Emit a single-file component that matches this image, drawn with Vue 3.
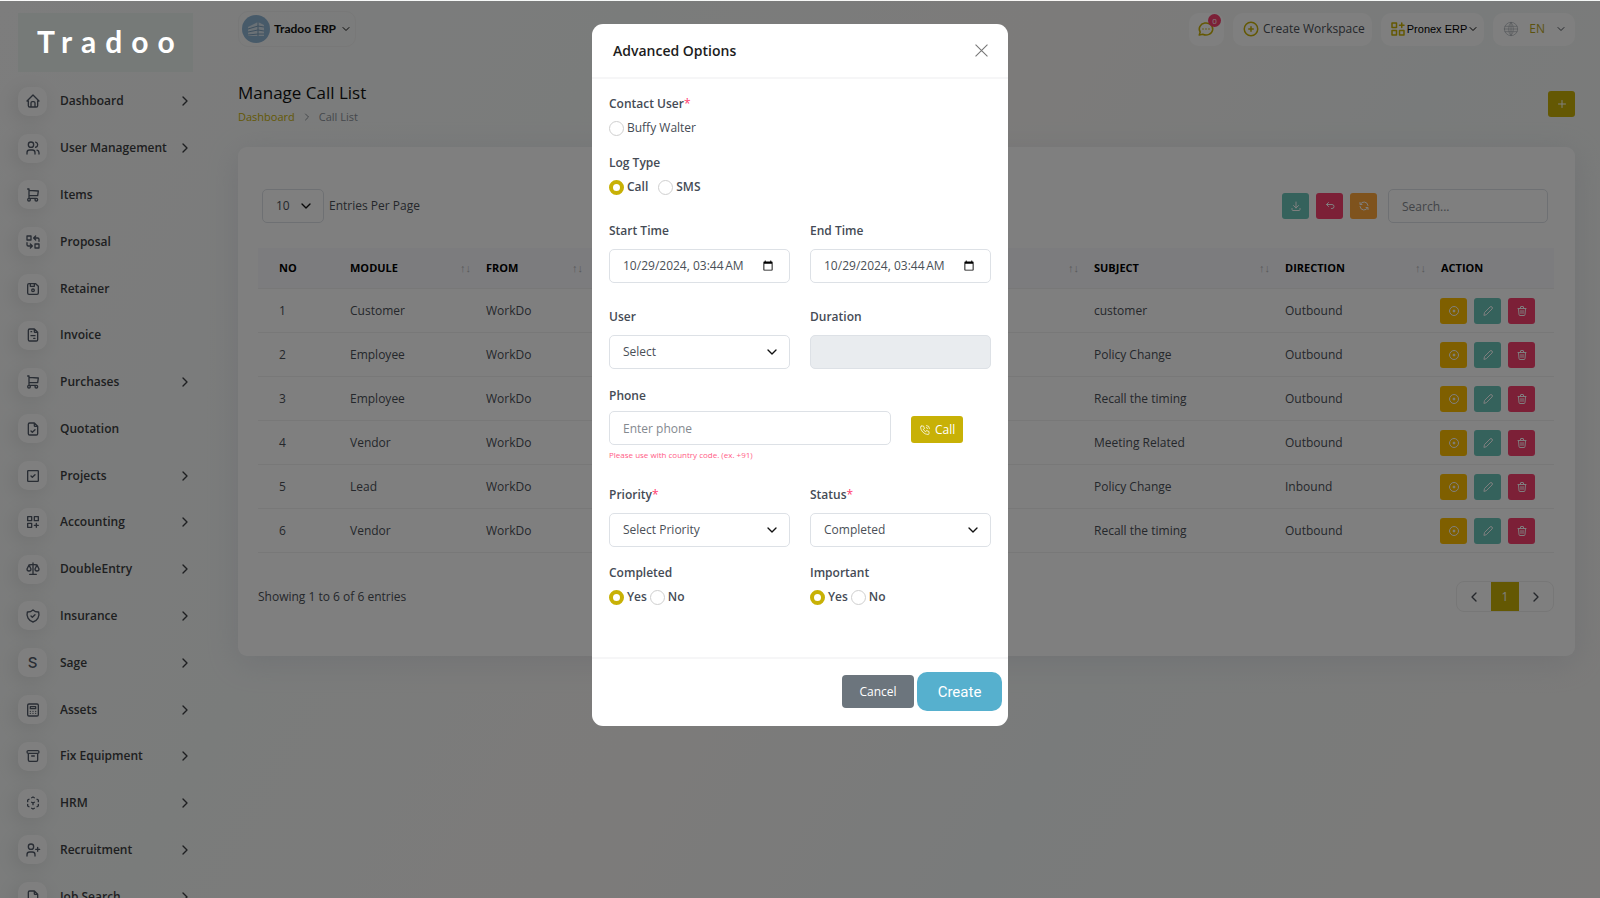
<template>
  <div class="page">
    <aside class="sidebar">
      <a href="#" class="logo">Tradoo</a>
      <nav class="nav">
        <a v-for="item in menu" :key="item.label" href="#" class="nav-item">
          <span class="nav-icon">
            <span v-if="item.letter" class="nav-letter">{{ item.letter }}</span>
            <svg v-else class="icon" viewBox="0 0 24 24"><path :d="icons[item.icon]" /></svg>
          </span>
          <span class="nav-label">{{ item.label }}</span>
          <svg v-if="item.children" class="icon nav-arrow" viewBox="0 0 24 24"><path :d="icons.right" /></svg>
        </a>
      </nav>
    </aside>

    <main class="content">
      <header class="topbar">
        <button class="pill company">
          <svg class="avatar" viewBox="0 0 28 28">
            <circle cx="14" cy="14" r="14" fill="#8fb4d3" />
            <path d="M6 12l10-5 6 3v11H6z" fill="#d5e2ec" />
            <path d="M6 14l10-3 6 1M6 17l10-2 6 1M6 20l10-1 6 0M16 7v14" fill="none" stroke="#7b9fbd" />
          </svg>
          <span>Tradoo ERP</span>
          <svg class="icon small" viewBox="0 0 24 24"><path :d="icons.down" /></svg>
        </button>
        <div class="topbar-right">
          <button class="pill chat" aria-label="Messages">
            <svg class="icon brand" viewBox="0 0 24 24"><path :d="icons.message" /></svg>
            <span class="badge">0</span>
          </button>
          <button class="pill create-ws">
            <svg class="icon brand" viewBox="0 0 24 24"><path :d="icons.circlePlus" /></svg>
            <span>Create Workspace</span>
          </button>
          <button class="pill workspace">
            <svg class="icon brand" viewBox="0 0 24 24"><path :d="icons.apps" /></svg>
            <span>Pronex ERP</span>
            <svg class="icon small" viewBox="0 0 24 24"><path :d="icons.down" /></svg>
          </button>
          <button class="pill lang">
            <svg class="icon globe" viewBox="0 0 24 24"><path :d="icons.world" /></svg>
            <span>EN</span>
            <svg class="icon small" viewBox="0 0 24 24"><path :d="icons.down" /></svg>
          </button>
        </div>
      </header>

      <div class="page-head">
        <div>
          <h1>Manage Call List</h1>
          <div class="breadcrumb">
            <a href="#">Dashboard</a>
            <svg class="icon small" viewBox="0 0 24 24"><path :d="icons.right" /></svg>
            <span>Call List</span>
          </div>
        </div>
        <button class="btn-icon bg-brand" aria-label="Add">
          <svg class="icon" viewBox="0 0 24 24"><path :d="icons.plus" /></svg>
        </button>
      </div>

      <section class="card">
        <div class="toolbar">
          <div class="select per-page">
            <select id="per-page"><option>10</option></select>
            <svg class="icon" viewBox="0 0 24 24"><path :d="icons.down" /></svg>
          </div>
          <label for="per-page">Entries Per Page</label>
          <div class="tools">
            <button class="btn-icon bg-teal" aria-label="Export">
              <svg class="icon" viewBox="0 0 24 24"><path :d="icons.download" /></svg>
            </button>
            <button class="btn-icon bg-red" aria-label="Reset">
              <svg class="icon" viewBox="0 0 24 24"><path :d="icons.back" /></svg>
            </button>
            <button class="btn-icon bg-orange" aria-label="Reload">
              <svg class="icon" viewBox="0 0 24 24"><path :d="icons.refresh" /></svg>
            </button>
          </div>
          <input class="input search" type="text" placeholder="Search..." aria-label="Search" />
        </div>

        <table class="table">
          <colgroup>
            <col class="c-no" /><col class="c-module" /><col class="c-from" /><col />
            <col class="c-subject" /><col class="c-direction" /><col class="c-action" />
          </colgroup>
          <thead>
            <tr>
              <th v-for="(col, i) in columns" :key="i">
                <div class="th">
                  <span>{{ col.label }}</span>
                  <span v-if="col.sort" class="sort">↑↓</span>
                </div>
              </th>
            </tr>
          </thead>
          <tbody>
            <tr v-for="(row, i) in rows" :key="i">
              <td>{{ i + 1 }}</td>
              <td>{{ row.module }}</td>
              <td>WorkDo</td>
              <td></td>
              <td>{{ row.subject }}</td>
              <td>{{ row.direction }}</td>
              <td>
                <div class="actions">
                  <button class="btn-icon bg-yellow" aria-label="View">
                    <svg class="icon" viewBox="0 0 24 24"><path :d="icons.view" /></svg>
                  </button>
                  <button class="btn-icon bg-teal" aria-label="Edit">
                    <svg class="icon" viewBox="0 0 24 24"><path :d="icons.pencil" /></svg>
                  </button>
                  <button class="btn-icon bg-red" aria-label="Delete">
                    <svg class="icon" viewBox="0 0 24 24"><path :d="icons.trash" /></svg>
                  </button>
                </div>
              </td>
            </tr>
          </tbody>
        </table>

        <div class="table-foot">
          <span>Showing 1 to 6 of 6 entries</span>
          <div class="pagination">
            <button aria-label="Previous"><svg class="icon" viewBox="0 0 24 24"><path :d="icons.left" /></svg></button>
            <button class="active">1</button>
            <button aria-label="Next"><svg class="icon" viewBox="0 0 24 24"><path :d="icons.right" /></svg></button>
          </div>
        </div>
      </section>
    </main>

    <div class="backdrop">
      <form class="modal" role="dialog" aria-labelledby="modal-title" @submit.prevent>
        <div class="modal-header">
          <h2 id="modal-title">Advanced Options</h2>
          <button type="button" class="btn-close" aria-label="Close">
            <svg viewBox="0 0 12 12"><path d="M0.5 0.5l11 11M11.5 0.5l-11 11" /></svg>
          </button>
        </div>

        <div class="modal-body">
          <div class="group tight">
            <span class="label">Contact User<i>*</i></span>
            <div class="radios">
              <label class="plain"><input v-model="form.contact" type="radio" value="buffy" />Buffy Walter</label>
            </div>
          </div>
          <div class="group tight log-type">
            <span class="label">Log Type</span>
            <div class="radios spaced">
              <label><input v-model="form.logType" type="radio" value="call" />Call</label>
              <label><input v-model="form.logType" type="radio" value="sms" />SMS</label>
            </div>
          </div>

          <div class="cols times">
            <div class="group">
              <label class="label" for="start">Start Time</label>
              <input id="start" v-model="form.start" class="input" type="datetime-local" />
            </div>
            <div class="group">
              <label class="label" for="end">End Time</label>
              <input id="end" v-model="form.end" class="input" type="datetime-local" />
            </div>
          </div>

          <div class="cols users">
            <div class="group">
              <label class="label" for="user">User</label>
              <div class="select">
                <select id="user"><option>Select</option></select>
                <svg class="icon" viewBox="0 0 24 24"><path :d="icons.down" /></svg>
              </div>
            </div>
            <div class="group">
              <label class="label" for="duration">Duration</label>
              <input id="duration" class="input" type="text" disabled />
            </div>
          </div>

          <div class="phone-row">
            <div class="group">
              <label class="label" for="phone">Phone</label>
              <input id="phone" v-model="form.phone" class="input" type="text" placeholder="Enter phone" />
              <small>Please use with country code. (ex. +91)</small>
            </div>
            <button type="button" class="btn-call bg-brand">
              <svg class="icon" viewBox="0 0 24 24"><path :d="icons.phone" /></svg>
              <span>Call</span>
            </button>
          </div>

          <div class="cols selects">
            <div class="group">
              <label class="label" for="priority">Priority<i>*</i></label>
              <div class="select">
                <select id="priority"><option>Select Priority</option></select>
                <svg class="icon" viewBox="0 0 24 24"><path :d="icons.down" /></svg>
              </div>
            </div>
            <div class="group">
              <label class="label" for="status">Status<i>*</i></label>
              <div class="select">
                <select id="status"><option>Completed</option></select>
                <svg class="icon" viewBox="0 0 24 24"><path :d="icons.down" /></svg>
              </div>
            </div>
          </div>

          <div class="cols flags">
            <div class="group tight">
              <span class="label">Completed</span>
              <div class="radios">
                <label><input v-model="form.completed" type="radio" value="yes" />Yes</label>
                <label><input v-model="form.completed" type="radio" value="no" />No</label>
              </div>
            </div>
            <div class="group tight">
              <span class="label">Important</span>
              <div class="radios">
                <label><input v-model="form.important" type="radio" value="yes" />Yes</label>
                <label><input v-model="form.important" type="radio" value="no" />No</label>
              </div>
            </div>
          </div>
        </div>

        <div class="modal-footer">
          <button type="button" class="btn-cancel">Cancel</button>
          <button type="submit" class="btn-create">Create</button>
        </div>
      </form>
    </div>
  </div>
</template>

<script setup>
import { reactive } from 'vue';

const file = 'M14 3v4a1 1 0 0 0 1 1h4M17 21H7a2 2 0 0 1-2-2V5a2 2 0 0 1 2-2h7l5 5v11a2 2 0 0 1-2 2z';

const icons = {
  home: 'M5 12H3l9-9 9 9h-2M5 12v7a2 2 0 0 0 2 2h10a2 2 0 0 0 2-2v-7M9 21v-6a2 2 0 0 1 2-2h2a2 2 0 0 1 2 2v6',
  users: 'M5 7a4 4 0 1 0 8 0a4 4 0 1 0-8 0M3 21v-2a4 4 0 0 1 4-4h4a4 4 0 0 1 4 4v2M16 3.13a4 4 0 0 1 0 7.75M21 21v-2a4 4 0 0 0-3-3.85',
  cart: 'M4 19a2 2 0 1 0 4 0a2 2 0 1 0-4 0M15 19a2 2 0 1 0 4 0a2 2 0 1 0-4 0M17 17H6V3H4M6 5l14 1-1 7H6',
  replace: 'M3 3h6v6H3zM15 15h6v6h-6zM21 11V8a2 2 0 0 0-2-2h-6l3 3m0-6l-3 3M3 13v3a2 2 0 0 0 2 2h6l-3-3m0 6l3-3',
  floppy: 'M6 4h10l4 4v10a2 2 0 0 1-2 2H6a2 2 0 0 1-2-2V6a2 2 0 0 1 2-2M10 14a2 2 0 1 0 4 0a2 2 0 1 0-4 0M14 4v4H8V4',
  file,
  invoice: file + 'M9 7h1M9 13h6M13 17h2',
  fileCheck: file + 'M9 15l2 2 4-4',
  checkbox: 'M4 5a1 1 0 0 1 1-1h14a1 1 0 0 1 1 1v14a1 1 0 0 1-1 1H5a1 1 0 0 1-1-1zM9 12l2 2 4-4',
  gridAdd: 'M4 4h6v6H4zM14 4h6v6h-6zM4 14h6v6H4zM14 17h6M17 14v6',
  apps: 'M4 4h6v6H4zM4 14h6v6H4zM14 14h6v6h-6zM14 7h6M17 4v6',
  scale: 'M7 20h10M6 6l6-1 6 1M12 3v17M9 12l-3-6-3 6a3 3 0 0 0 6 0M21 12l-3-6-3 6a3 3 0 0 0 6 0',
  shield: 'M9 12l2 2 4-4M12 3a12 12 0 0 0 8.5 3a12 12 0 0 1-8.5 15a12 12 0 0 1-8.5-15a12 12 0 0 0 8.5-3',
  calculator: 'M4 5a2 2 0 0 1 2-2h12a2 2 0 0 1 2 2v14a2 2 0 0 1-2 2H6a2 2 0 0 1-2-2zM8 7h8v3H8zM8 14v.01M12 14v.01M16 14v.01M8 17v.01M12 17v.01M16 17v.01',
  archive: 'M3 6a2 2 0 0 1 2-2h14a2 2 0 0 1 0 4H5a2 2 0 0 1-2-2M5 8v10a2 2 0 0 0 2 2h10a2 2 0 0 0 2-2V8M10 12h4',
  cube: 'M6 17.6l-2-1.1V14M4 10V7.5l2-1.1M10 4.1L12 3l2 1.1M18 6.4l2 1.1V10M20 14v2.5l-2 1.12M14 19.9L12 21l-2-1.1M12 12l2-1.1M12 12v2.5M12 12l-2-1.12',
  userPlus: 'M5 7a4 4 0 1 0 8 0a4 4 0 1 0-8 0M3 21v-2a4 4 0 0 1 4-4h4a4 4 0 0 1 4 4v2M16 11h6M19 8v6',
  right: 'M9 6l6 6-6 6',
  left: 'M15 6l-6 6 6 6',
  down: 'M6 9l6 6 6-6',
  plus: 'M12 5v14M5 12h14',
  message: 'M3 20l1.3-3.9a9 8 0 1 1 3.4 2.9zM12 12v.01M8 12v.01M16 12v.01',
  circlePlus: 'M3 12a9 9 0 1 0 18 0a9 9 0 1 0-18 0M9 12h6M12 9v6',
  world: 'M2 12a10 10 0 1 0 20 0a10 10 0 1 0-20 0M3 8h18M3 16h18M2 12h20M12 2a15 15 0 0 0 0 20M12 2a15 15 0 0 1 0 20M12 2v20',
  download: 'M4 17v2a2 2 0 0 0 2 2h12a2 2 0 0 0 2-2v-2M7 11l5 5 5-5M12 4v12',
  back: 'M9 13L5 9l4-4M5 9h11a4 4 0 0 1 0 8h-1',
  refresh: 'M20 11A8.1 8.1 0 0 0 4.5 9M4 5v4h4M4 13a8.1 8.1 0 0 0 15.5 2M20 19v-4h-4',
  view: 'M3 12a9 9 0 1 0 18 0a9 9 0 1 0-18 0M11 12a1 1 0 1 0 2 0a1 1 0 1 0-2 0M10 12h4M12 10v4',
  pencil: 'M4 20l1-5L16 4a2.8 2.8 0 0 1 4 4L9 19z',
  trash: 'M4 7h16M10 11v6M14 11v6M5 7l1 12a2 2 0 0 0 2 2h8a2 2 0 0 0 2-2l1-12M9 7V4a1 1 0 0 1 1-1h4a1 1 0 0 1 1 1v3',
  phone: 'M5 4h4l2 5-2.5 1.5a11 11 0 0 0 5 5L15 13l5 2v4a2 2 0 0 1-2 2A16 16 0 0 1 3 6a2 2 0 0 1 2-2M15 7a2 2 0 0 1 2 2M15 3a6 6 0 0 1 6 6'
};

const menu = [
  { label: 'Dashboard', icon: 'home', children: true },
  { label: 'User Management', icon: 'users', children: true },
  { label: 'Items', icon: 'cart' },
  { label: 'Proposal', icon: 'replace' },
  { label: 'Retainer', icon: 'floppy' },
  { label: 'Invoice', icon: 'invoice' },
  { label: 'Purchases', icon: 'cart', children: true },
  { label: 'Quotation', icon: 'fileCheck' },
  { label: 'Projects', icon: 'checkbox', children: true },
  { label: 'Accounting', icon: 'gridAdd', children: true },
  { label: 'DoubleEntry', icon: 'scale', children: true },
  { label: 'Insurance', icon: 'shield', children: true },
  { label: 'Sage', letter: 'S', children: true },
  { label: 'Assets', icon: 'calculator', children: true },
  { label: 'Fix Equipment', icon: 'archive', children: true },
  { label: 'HRM', icon: 'cube', children: true },
  { label: 'Recruitment', icon: 'userPlus', children: true },
  { label: 'Job Search', icon: 'file', children: true }
];

const columns = [
  { label: 'NO' },
  { label: 'MODULE', sort: true },
  { label: 'FROM', sort: true },
  { label: '', sort: true },
  { label: 'SUBJECT', sort: true },
  { label: 'DIRECTION', sort: true },
  { label: 'ACTION' }
];

const rows = [
  { module: 'Customer', subject: 'customer', direction: 'Outbound' },
  { module: 'Employee', subject: 'Policy Change', direction: 'Outbound' },
  { module: 'Employee', subject: 'Recall the timing', direction: 'Outbound' },
  { module: 'Vendor', subject: 'Meeting Related', direction: 'Outbound' },
  { module: 'Lead', subject: 'Policy Change', direction: 'Inbound' },
  { module: 'Vendor', subject: 'Recall the timing', direction: 'Outbound' }
];

const form = reactive({
  contact: '',
  logType: 'call',
  start: '2024-10-29T03:44',
  end: '2024-10-29T03:44',
  phone: '',
  completed: 'yes',
  important: 'yes'
});
</script>

<style>
body {
  margin: 0;
  overflow: hidden;
}
</style>

<style scoped>
.page {
  display: flex;
  height: 100vh;
  overflow: hidden;
  background: linear-gradient(120deg, #fafafa 0%, #f5f8f7 30%, #f9f7f5 50%, #f3f7f6 70%, #f8f6f4 100%);
  color: #4a4f57;
  font-family: "Open Sans", "Noto Sans", sans-serif;
  font-size: 12px;
  line-height: 20px;
}

.page *, .page *::before { box-sizing: border-box; }

button, input, select {
  font: inherit;
  color: inherit;
}

button {
  border: 0;
  padding: 0;
  background: none;
  cursor: pointer;
}

a { text-decoration: none; }

.icon {
  width: 16px;
  height: 16px;
  flex: none;
  fill: none;
  stroke: currentColor;
  stroke-width: 2;
  stroke-linecap: round;
  stroke-linejoin: round;
}
.icon.small { width: 12px; height: 12px; }
.icon.brand { width: 18px; height: 18px; color: #c8b106; }

.bg-brand { background: #c8b106; color: #fff; }
.bg-teal { background: #6ac4b8; color: #fff; }
.bg-red { background: #f9406e; color: #fff; }
.bg-orange { background: #ffa63a; color: #fff; }
.bg-yellow { background: #ffbf00; color: #fff; }

/* Sidebar */
.sidebar {
  width: 238px;
  flex: none;
  padding: 13px 45px 0 18px;
}

/* stays bright above the backdrop */
.logo {
  position: relative;
  z-index: 20;
  display: block;
  height: 59px;
  padding-left: 19px;
  background: #767a78;
  color: #fff;
  font-family: Lato, sans-serif;
  font-size: 30px;
  font-weight: 700;
  line-height: 57px;
  letter-spacing: 9px;
}

.nav {
  display: flex;
  flex-direction: column;
  height: calc(100vh - 56px);
  margin-top: 6px;
}

.nav-item {
  display: flex;
  flex: 1;
  align-items: center;
  color: #3d3f42;
  font-weight: 600;
}

.nav-icon {
  display: flex;
  align-items: center;
  justify-content: center;
  width: 29px;
  height: 29px;
  margin-right: 13px;
  border-radius: 10px;
  background: #fff;
  color: #525b69;
  box-shadow: -3px 4px 20px rgba(0, 0, 0, 0.1);
}
.nav-letter { font-family: Inter, sans-serif; font-size: 15px; font-weight: 500; }
.nav-label { flex: 1; }

/* Top bar */
.content {
  flex: 1;
  min-width: 0;
  padding: 11px 25px 0 0;
}

.topbar {
  display: flex;
  align-items: center;
  justify-content: space-between;
  height: 36px;
}
.topbar-right { display: flex; gap: 9px; }

.pill {
  display: flex;
  align-items: center;
  height: 33px;
  border-radius: 10px;
  background: #fff;
}
.company {
  height: 36px;
  gap: 4px;
  padding: 0 3px;
  border: 1px solid #f0f0f0;
  background: transparent;
  color: #111;
  font-family: Lato, sans-serif;
  font-weight: 700;
}
.avatar { width: 28px; height: 28px; }
.chat { position: relative; padding: 0 9px 0 8px; }
.badge {
  position: absolute;
  top: 1px;
  right: 3px;
  width: 13px;
  height: 13px;
  border-radius: 50%;
  background: #f9406e;
  color: #fff;
  font-size: 8px;
  line-height: 13px;
}
.create-ws { gap: 3px; padding: 0 7px 0 9px; }
.workspace {
  padding: 0 5px 0 8px;
  color: #000;
  font-family: "Liberation Sans", sans-serif;
  font-size: 11px;
}
.lang { gap: 10px; padding: 0 8px 0 10px; }
.lang span { color: #b9a61c; }
.globe { color: #aab0b6; stroke-width: 1; }

/* Page head */
.page-head {
  display: flex;
  align-items: center;
  justify-content: space-between;
  margin: 34px 0 21px;
}
h1 {
  margin: 0;
  color: #111;
  font-size: 17px;
  font-weight: 500;
  line-height: 24px;
}
.breadcrumb {
  display: flex;
  align-items: center;
  gap: 6px;
  margin-top: 3px;
  color: #8b9198;
  font-size: 11px;
  line-height: 18px;
}
.breadcrumb a { color: #c8b106; }

.btn-icon {
  display: flex;
  align-items: center;
  justify-content: center;
  width: 27px;
  height: 26px;
  border-radius: 3px;
}
.btn-icon .icon { width: 12px; height: 12px; }

/* Card */
.card {
  padding: 42px 21px 44px 20px;
  border-radius: 9px;
  background: #fff;
  box-shadow: 0 6px 30px rgba(182, 186, 203, 0.3);
}

.toolbar {
  display: flex;
  align-items: center;
  gap: 5px;
  padding: 0 6px 0 4px;
}
.per-page { width: 62px; }
.tools { display: flex; gap: 7px; margin: 0 6px 0 auto; }

.input, select {
  width: 100%;
  height: 34px;
  padding: 0 13px;
  border: 1px solid #dde1e6;
  border-radius: 5px;
  background: #fff;
  color: #4a4f57;
}
.input.search { width: 160px; }
.input::placeholder { color: #84898f; opacity: 1; }
.input:disabled { background: #e9ecef; }

.input::-webkit-datetime-edit-month-field,
.input::-webkit-datetime-edit-day-field,
.input::-webkit-datetime-edit-year-field,
.input::-webkit-datetime-edit-hour-field,
.input::-webkit-datetime-edit-minute-field,
.input::-webkit-datetime-edit-ampm-field { padding: 0; }

.select { display: grid; align-items: center; }
.select > * { grid-area: 1 / 1; }
.select select { appearance: none; }
.select .icon {
  justify-self: end;
  margin-right: 10px;
  color: #111;
  pointer-events: none;
}

.table {
  width: 100%;
  margin-top: 25px;
  border-collapse: separate;
  border-spacing: 0;
  table-layout: fixed;
}
.c-no { width: 78px; }
.c-module { width: 136px; }
.c-from { width: 112px; }
.c-subject { width: 191px; }
.c-direction { width: 156px; }
.c-action { width: 127px; }

th, td {
  height: 44px;
  padding: 0 1px 0 14px;
  border-bottom: 1px solid #f1f1f1;
  text-align: left;
}
th:first-child, td:first-child { padding-left: 21px; }
th {
  height: 41px;
  background: #f8f9fd;
  color: #000;
  font-size: 11px;
  font-weight: 700;
}
.th { display: flex; justify-content: space-between; }
.sort { color: #b5b5b8; font-weight: 400; }
.actions { display: flex; gap: 7px; margin-left: -1px; }

.table-foot {
  display: flex;
  align-items: center;
  justify-content: space-between;
  margin-top: 28px;
}
.pagination {
  display: flex;
  overflow: hidden;
  border: 1px solid #eee;
  border-radius: 8px;
}
.pagination button {
  display: flex;
  align-items: center;
  justify-content: center;
  width: 34px;
  height: 29px;
}
.pagination .active {
  width: 28px;
  background: #c8b106;
  color: #fff;
}

/* Modal */
.backdrop {
  position: fixed;
  inset: 1px 0 0;
  z-index: 10;
  display: flex;
  align-items: flex-start;
  justify-content: center;
  padding-top: 23px;
  background: rgba(0, 0, 0, 0.5);
}

.modal {
  width: 416px;
  border-radius: 11px;
  background: #fff;
}

.modal-header {
  display: flex;
  align-items: center;
  justify-content: space-between;
  height: 55px;
  padding: 0 20px 0 21px;
  border-bottom: 2px solid #f6f6f7;
}
h2 {
  margin: 0;
  color: #1c1c1c;
  font-size: 14px;
  font-weight: 600;
}
.btn-close { display: flex; }
.btn-close svg {
  width: 13px;
  height: 13px;
  stroke: #777;
  fill: none;
}

.modal-body { padding: 15px 17px 50px; }

.group { display: flex; flex-direction: column; gap: 8px; }
.group.tight { gap: 4px; }
.label, .radios label { color: #454b55; font-weight: 600; }
.label i { color: #ff3a6e; font-style: normal; font-weight: 400; }

.radios { display: flex; gap: 3px; }
.radios.spaced { gap: 10px; }
.radios label { display: flex; align-items: center; gap: 3px; }
.radios .plain { font-weight: 400; }
.radios input {
  appearance: none;
  width: 15px;
  height: 15px;
  margin: 0;
  border: 1px solid #cfcfcf;
  border-radius: 50%;
  background: #fff;
}
.radios input:checked { border: 4px solid #c8b106; }

.cols {
  display: grid;
  grid-template-columns: repeat(2, minmax(0, 1fr));
  gap: 20px;
}
.log-type { margin-top: 15px; }
.times { margin-top: 24px; }
.users { margin-top: 24px; }

.phone-row {
  display: flex;
  align-items: center;
  gap: 20px;
  margin-top: 17px;
}
.phone-row .group { width: 282px; gap: 5px; }
small {
  color: #ff5c86;
  font-size: 8px;
  line-height: 10px;
}
.btn-call {
  display: flex;
  align-items: center;
  gap: 4px;
  height: 27px;
  padding: 0 8px;
  margin-top: 13px;
  border-radius: 3px;
}
.btn-call .icon { width: 12px; height: 12px; stroke-width: 1.5; }

.selects { margin-top: 25px; }
.flags { margin-top: 16px; }

.modal-footer {
  display: flex;
  align-items: center;
  justify-content: flex-end;
  gap: 3px;
  padding: 13px 6px 15px;
  border-top: 2px solid #f6f6f7;
}
.btn-cancel {
  width: 72px;
  height: 33px;
  border-radius: 4px;
  background: #6c757d;
  color: #fff;
}
.btn-create {
  width: 85px;
  height: 39px;
  border-radius: 10px;
  background: #56b0ce;
  color: #fff;
  font-family: Roboto, sans-serif;
  font-size: 15px;
}
</style>
